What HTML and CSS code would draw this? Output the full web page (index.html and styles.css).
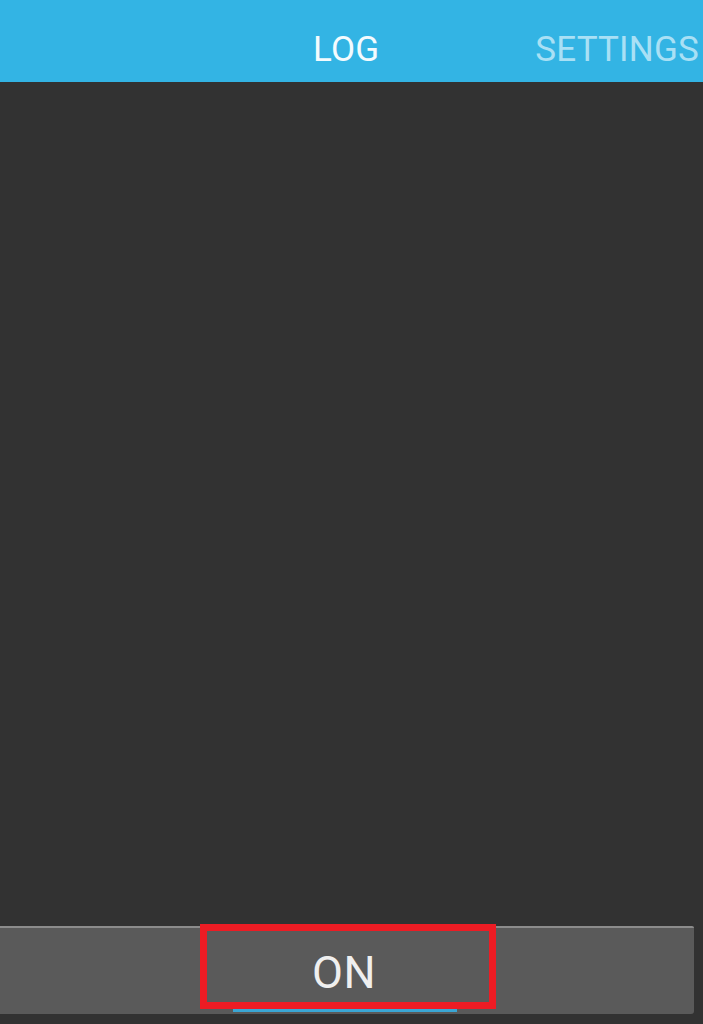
FILE: index.html
```html
<!DOCTYPE html>
<html>
<head>
<meta charset="utf-8">
<link rel="stylesheet" href="styles.css">
</head>
<body>
<div class="screen">
  <header class="tabs">
    <span class="tab tab-active">LOG</span>
    <span class="tab tab-inactive">SETTINGS</span>
  </header>
  <main class="log"></main>
  <footer class="footer">
    <div class="toggle">
      <span class="toggle-label">ON</span>
      <span class="toggle-indicator"></span>
      <span class="highlight"></span>
    </div>
  </footer>
</div>
</body>
</html>
```

FILE: styles.css
```css
html, body {
  margin: 0;
  padding: 0;
  background: #323232;
}
.screen {
  width: 703px;
  height: 1024px;
  display: flex;
  flex-direction: column;
  overflow: hidden;
  font-family: Roboto, "Liberation Sans", sans-serif;
}
.tabs {
  height: 82px;
  flex: none;
  background: #33b4e4;
  display: flex;
  align-items: center;
  padding-left: 313px;
  gap: 156px;
  white-space: nowrap;
  box-sizing: border-box;
  padding-top: 17px;
}
.tab {
  font-size: 35px;
  letter-spacing: 0.2px;
}
.tab-active {
  color: #f4fbfe;
}
.tab-inactive {
  color: #a9e0f5;
}
.log {
  flex: 1;
  background: #323232;
}
.footer {
  flex: none;
  height: 98px;
  padding: 0 9px 10px 0;
  box-sizing: border-box;
}
.toggle {
  position: relative;
  height: 88px;
  background: #5a5a5a;
  border-top: 2px solid #8c8c8c;
  border-radius: 0 2px 3px 0;
  box-sizing: border-box;
  display: flex;
  justify-content: center;
  align-items: center;
}
.toggle-label {
  color: #efefef;
  font-size: 45px;
  letter-spacing: 0.5px;
  margin-left: -6px;
  margin-top: 2px;
}
.toggle-indicator {
  position: absolute;
  left: 233px;
  width: 224px;
  bottom: 2px;
  height: 4px;
  background: #3aa6d4;
}
.highlight {
  position: absolute;
  left: 200px;
  top: -4px;
  width: 296px;
  height: 85px;
  border: 7px solid #ed1c24;
  box-sizing: border-box;
}
```
